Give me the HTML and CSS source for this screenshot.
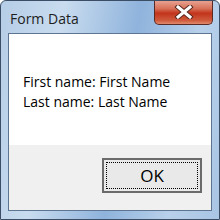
FILE: index.html
```html
<!DOCTYPE html>
<html lang="en">
<head>
    <meta charset="UTF-8">
    <title>Form Data</title>
    <link rel="stylesheet" href="styles.css">
</head>
<body>
<div class="window">
    <div class="titlebar">
        <span class="caption">Form Data</span>
        <div class="close">
            <svg width="24" height="14" viewBox="0 0 24 14">
                <path d="M6 2 L18 12 M18 2 L6 12" stroke="#5a2a20" stroke-width="5" stroke-linecap="square"/>
                <path d="M6 2 L18 12 M18 2 L6 12" stroke="#ffffff" stroke-width="3" stroke-linecap="square"/>
            </svg>
        </div>
    </div>
    <div class="client">
        <div class="message">
            <p>First name: First Name</p>
            <p>Last name: Last Name</p>
        </div>
        <div class="actions">
            <div class="btn"><span>OK</span></div>
        </div>
    </div>
</div>
</body>
</html>
```

FILE: styles.css
```css
html,body,p,div{
    margin: 0;
    padding: 0;
}
body{
    background: #ffffff;
    font-family: "Open Sans", "Noto Sans", sans-serif;
}
.window{
    width: 220px;
    height: 220px;
    box-sizing: border-box;
    border: 1px solid #3c4e66;
    border-radius: 6px 6px 0 0;
    background: linear-gradient(100deg, #b5cde6 0%, #c9dcef 25%, #8fb3dc 55%, #b8d0ea 80%, #a9c5e4 100%);
    display: flex;
    flex-direction: column;
    overflow: hidden;
}
.titlebar{
    height: 32px;
    display: flex;
    align-items: flex-start;
    justify-content: space-between;
    padding: 0 6px 0 9px;
}
.caption{
    font-size: 14px;
    color: #1e1e1e;
    margin-top: 8px;
}
.close{
    width: 59px;
    height: 25px;
    margin-top: -1px;
    box-sizing: border-box;
    border: 1px solid #5a2a24;
    border-top: none;
    border-radius: 0 0 5px 5px;
    background: linear-gradient(#e8a796 0%, #d8735b 35%, #c2341c 55%, #cf5a3c 85%, #e08a6c 100%);
    display: flex;
    align-items: center;
    justify-content: center;
}
.client{
    flex: 1;
    margin: 0 7px 8px 7px;
    border: 1px solid #5d7591;
    background: #f0f0f0;
    display: flex;
    flex-direction: column;
}
.message{
    background: #ffffff;
    height: 111px;
    box-sizing: border-box;
    padding: 38px 0 0 14px;
    font-size: 14px;
    line-height: 20px;
    color: #000000;
}
.actions{
    flex: 1;
    display: flex;
    justify-content: flex-end;
    padding: 13px 9px 0 0;
}
.btn{
    width: 100px;
    height: 35px;
    box-sizing: border-box;
    border: 2px solid #6b6b6b;
    background: #e9e9e9;
    padding: 2px;
}
.btn span{
    display: flex;
    height: 100%;
    box-sizing: border-box;
    border: 1px dotted #000000;
    align-items: center;
    justify-content: center;
    font-size: 17px;
    color: #000000;
}
```
